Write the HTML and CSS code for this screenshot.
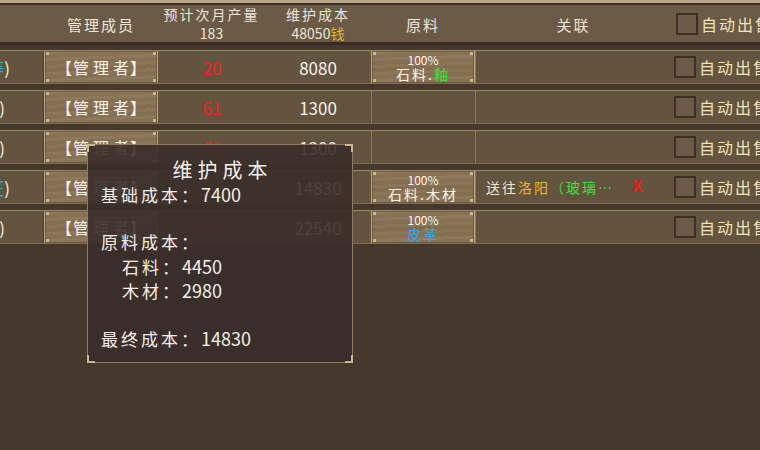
FILE: index.html
```html
<!DOCTYPE html>
<html lang="zh">
<head>
<meta charset="utf-8">
<link rel="stylesheet" href="styles.css">
</head>
<body>
<div class="page">
  <div class="topstrip"></div>
  <div class="header">
    <div class="hcell"></div>
    <div class="hcell">管理成员</div>
    <div class="hcell two"><span>预计次月产量</span><span class="num">183</span></div>
    <div class="hcell two"><span>维护成本</span><span class="num">48050<em class="gold">钱</em></span></div>
    <div class="hcell">原料</div>
    <div class="hcell">关联</div>
    <div class="hcell check"><span class="box"></span><span class="auto">自动出售</span></div>
  </div>
  <div class="rows">
    <div class="row">
      <div class="cell name"><span class="tail a"><span class="blue">工匠等</span>)</span></div>
      <div class="cell"><div class="btn mgr"><span class="bl">【</span>管理者<span class="br">】</span></div></div>
      <div class="cell red">20</div>
      <div class="cell cost">8080</div>
      <div class="cell"><div class="btn mat"><span class="pct">100%</span><span>石料.<em class="green">釉</em></span></div></div>
      <div class="cell link"></div>
      <div class="cell check"><span class="box"></span><span class="auto">自动出售</span></div>
    </div>
    <div class="row">
      <div class="cell name"><span class="tail b">（甲乙)</span></div>
      <div class="cell"><div class="btn mgr"><span class="bl">【</span>管理者<span class="br">】</span></div></div>
      <div class="cell red">61</div>
      <div class="cell cost">1300</div>
      <div class="cell plain"></div>
      <div class="cell link"></div>
      <div class="cell check"><span class="box"></span><span class="auto">自动出售</span></div>
    </div>
    <div class="row">
      <div class="cell name"><span class="tail b">（甲乙)</span></div>
      <div class="cell"><div class="btn mgr"><span class="bl">【</span>管理者<span class="br">】</span></div></div>
      <div class="cell red">61</div>
      <div class="cell cost">1300</div>
      <div class="cell plain"></div>
      <div class="cell link"></div>
      <div class="cell check"><span class="box"></span><span class="auto">自动出售</span></div>
    </div>
    <div class="row">
      <div class="cell name"><span class="tail a"><span class="blue">木匠</span>)</span></div>
      <div class="cell"><div class="btn mgr"><span class="bl">【</span>管理者<span class="br">】</span></div></div>
      <div class="cell red">24</div>
      <div class="cell cost">14830</div>
      <div class="cell"><div class="btn mat"><span class="pct">100%</span><span>石料.木材</span></div></div>
      <div class="cell link"><span>送往<em class="gold">洛阳</em><em class="green">（玻璃…</em></span><span class="x">X</span></div>
      <div class="cell check"><span class="box"></span><span class="auto">自动出售</span></div>
    </div>
    <div class="row">
      <div class="cell name"><span class="tail b">（甲乙)</span></div>
      <div class="cell"><div class="btn mgr"><span class="bl">【</span>管理者<span class="br">】</span></div></div>
      <div class="cell red">17</div>
      <div class="cell cost">22540</div>
      <div class="cell"><div class="btn mat"><span class="pct">100%</span><span class="blue">皮革</span></div></div>
      <div class="cell link"></div>
      <div class="cell check"><span class="box"></span><span class="auto">自动出售</span></div>
    </div>
  </div>

  <div class="tip">
    <span class="corner tl"></span><span class="corner tr"></span>
    <span class="corner bl"></span><span class="corner br"></span>
    <div class="tip-title">维护成本</div>
    <div class="tip-line">基础成本：<span class="n">7400</span></div>
    <div class="tip-line"></div>
    <div class="tip-line">原料成本：</div>
    <div class="tip-line indent">石料：<span class="n">4450</span></div>
    <div class="tip-line indent">木材：<span class="n">2980</span></div>
    <div class="tip-line"></div>
    <div class="tip-line">最终成本：<span class="n">14830</span></div>
  </div>
</div>
</body>
</html>
```

FILE: styles.css
```css
html, body {
  margin: 0;
  padding: 0;
  background: #45392d;
}
.page {
  width: 760px;
  height: 450px;
  overflow: hidden;
  position: relative;
  background: #45392d;
  font-family: "Noto Sans CJK SC", "Noto Sans", sans-serif;
  color: #f3eee4;
}
em { font-style: normal; }
.gold { color: #e6b52a; }
.green { color: #3ee03a; }
.blue { color: #3aa6e0; }

.topstrip {
  height: 3px;
  background: #baa88d;
}
.header {
  height: 37px;
  background: #6b5b46;
  border-top: 2px solid #3d3026;
  border-bottom: 3px solid #382b22;
  display: grid;
  grid-template-columns: 44px 114px 107px 106px 104px 197px 120px;
}
.hcell {
  display: flex;
  align-items: center;
  justify-content: center;
  font-size: 15px;
  letter-spacing: 2px;
  color: #ece6da;
  white-space: nowrap;
}
.hcell.two {
  flex-direction: column;
  line-height: 19px;
  font-size: 14px;
}
.hcell .num {
  font-size: 14px;
  letter-spacing: 0;
}
.hcell.check {
  justify-content: flex-start;
  padding-left: 4px;
}

.rows {
  padding-top: 5px;
}
.row {
  height: 32px;
  margin-bottom: 6px;
  background: #63543f;
  border-top: 1px solid #9a8763;
  border-bottom: 1px solid #7d6b4f;
  display: grid;
  grid-template-columns: 44px 114px 107px 106px 104px 197px 120px;
}
.cell {
  display: flex;
  align-items: center;
  justify-content: center;
  font-size: 17px;
  white-space: nowrap;
  overflow: hidden;
}
.cell.name {
  justify-content: flex-end;
  border-right: 1px solid #4a3d2f;
}
.tail.a { margin-right: 33px; }
.tail.b { margin-right: 38px; }
.cell.red { color: #ff1c1c; margin-left: 1px; }
.cell.cost { color: #f5f1ea; }
.cell.link {
  justify-content: flex-start;
  padding-left: 10px;
  font-size: 14px;
  letter-spacing: 2px;
  border-left: 1px solid #8a7858;
  color: #efe6d4;
}
.cell.plain { border-left: 1px solid #8a7858; }
.x {
  color: #ff1515;
  font-weight: bold;
  font-family: "Liberation Sans", sans-serif;
  font-size: 16px;
  margin-left: 18px;
}
.cell.check {
  justify-content: flex-start;
  padding-left: 2px;
  overflow: visible;
}
.box {
  width: 18px;
  height: 18px;
  border: 2px solid #3c2f24;
  background: #6b5a48;
  flex: none;
}
.auto {
  margin-left: 3px;
  font-size: 16px;
  letter-spacing: 2px;
  color: #f1e3b4;
}

.btn {
  box-sizing: border-box;
  width: 100%;
  height: 34px;
  margin-top: -1px;
  margin-bottom: -1px;
  background:
    linear-gradient(#cdb98f, #cdb98f) left top / 4px 4px no-repeat,
    linear-gradient(#cdb98f, #cdb98f) right top / 4px 4px no-repeat,
    linear-gradient(#cdb98f, #cdb98f) left bottom / 4px 4px no-repeat,
    linear-gradient(#cdb98f, #cdb98f) right bottom / 4px 4px no-repeat,
    repeating-linear-gradient(178deg, rgba(255,255,255,0.03) 0 3px, rgba(0,0,0,0.03) 3px 7px),
    linear-gradient(180deg, #8d775b 0%, #86704f 55%, #8c765a 100%);
  border: 1px solid #bba57c;
  box-shadow: inset 0 0 0 1px #6f5c43;
  display: flex;
  align-items: center;
  justify-content: center;
  color: #f7f3ec;
}
.btn.mgr {
  font-size: 16px;
  letter-spacing: 4px;
}
.btn.mgr .bl { letter-spacing: 1px; }
.btn.mgr .br { letter-spacing: 0; margin-left: -3px; }
.btn.mat {
  flex-direction: column;
  font-size: 14px;
  line-height: 15px;
  letter-spacing: 2px;
}
.btn.mat .pct {
  font-size: 12px;
  letter-spacing: 0;
}

.tip {
  position: absolute;
  left: 87px;
  top: 144px;
  width: 251px;
  height: 205px;
  background: rgba(57, 46, 42, 0.9);
  border: 1px solid #8e7c5c;
  padding: 12px 0 0 13px;
  color: #f2eee8;
  font-size: 17px;
}
.corner {
  position: absolute;
  width: 6px;
  height: 6px;
  border-color: #cbb78c;
  border-style: solid;
  border-width: 0;
}
.corner.tl { top: -1px; left: -1px; border-top-width: 2px; border-left-width: 2px; }
.corner.tr { top: -1px; right: -1px; border-top-width: 2px; border-right-width: 2px; }
.corner.bl { bottom: -1px; left: -1px; border-bottom-width: 2px; border-left-width: 2px; }
.corner.br { bottom: -1px; right: -1px; border-bottom-width: 2px; border-right-width: 2px; }
.tip-title {
  font-size: 20px;
  line-height: 25px;
  letter-spacing: 5px;
  text-align: center;
  margin-left: -8px;
}
.tip-line {
  height: 24px;
  line-height: 24px;
  letter-spacing: 3px;
}
.tip-line .n {
  font-size: 18px;
  letter-spacing: 0;
}
.tip-line.indent { padding-left: 21px; }
```
